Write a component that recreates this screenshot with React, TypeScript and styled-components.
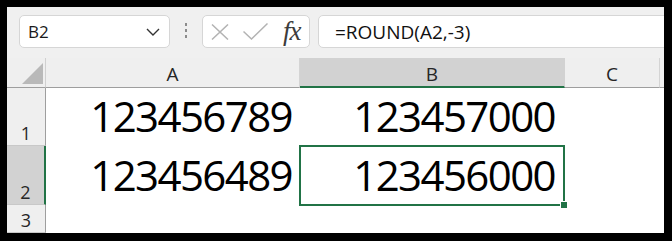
import React from "react";
import styled, { createGlobalStyle } from "styled-components";

const green = "#217346";

const Global = createGlobalStyle`
  * { box-sizing: border-box; }
  html, body { margin: 0; padding: 0; background: #000; }
  body { font-family: "Open Sans", "Noto Sans", sans-serif; }
`;

const Frame = styled.div`
  width: 672px;
  height: 241px;
  background: #000;
  padding: 7px 8px 8px 7px;
`;

const Window = styled.div`
  width: 100%;
  height: 100%;
  background: #fff;
  overflow: hidden;
  display: flex;
  flex-direction: column;
`;

const FormulaBar = styled.div`
  height: 51px;
  flex: none;
  display: flex;
  align-items: flex-start;
  padding: 8px 0 0 12px;
  background: #f0f0f0;
`;

const Box = styled.div`
  height: 33px;
  background: #fff;
  border: 1px solid #d6d6d6;
  border-radius: 5px;
  display: flex;
  align-items: center;
`;

const NameBox = styled(Box)`
  width: 151px;
  padding: 0 9px 0 8px;
  justify-content: space-between;
  font-size: 17px;
  color: #1a1a1a;
`;

const Grip = styled.div`
  width: 32px;
  height: 33px;
  display: flex;
  flex-direction: column;
  align-items: center;
  justify-content: center;
  gap: 3px;
  padding-bottom: 2px;
`;

const Dot = styled.span`
  width: 2px;
  height: 3px;
  background: #8c8c8c;
`;

const FxBox = styled(Box)`
  width: 108px;
  padding-left: 8px;
  gap: 14px;
`;

const Fx = styled.span`
  font-family: "Liberation Serif", "DejaVu Serif", serif;
  font-style: italic;
  font-size: 27px;
  line-height: 1;
  color: #3c3c3c;
  margin-left: 1px;
  letter-spacing: -1px;
`;

const FormulaInput = styled(Box)`
  flex: 1;
  margin-left: 8px;
  margin-right: -8px;
  padding-left: 16px;
  font-size: 19px;
  color: #111;
`;

const Sheet = styled.div`
  flex: 1;
  display: grid;
  grid-template-columns: 39px 254px 265px 95px 1fr;
  grid-template-rows: 30px 58px 59px 1fr;
`;

const Corner = styled.div`
  background: #efefef;
  border-right: 1px solid #d0d0d0;
  border-bottom: 1px solid #9e9e9e;
  display: flex;
  align-items: flex-end;
  justify-content: flex-end;
  padding: 0 2px 3px 0;
`;

const ColHeader = styled.div<{ $selected?: boolean }>`
  background: ${(p) => (p.$selected ? "#d2d2d2" : "#efefef")};
  border-right: 1px solid ${(p) => (p.$selected ? "#d2d2d2" : "#d4d4d4")};
  border-bottom: ${(p) => (p.$selected ? `2px solid ${green}` : "1px solid #9e9e9e")};
  display: flex;
  align-items: center;
  justify-content: center;
  padding-top: 3px;
  font-size: 19px;
  color: #262626;
`;

const RowHeader = styled.div<{ $selected?: boolean }>`
  background: ${(p) => (p.$selected ? "#d2d2d2" : "#efefef")};
  border-right: ${(p) => (p.$selected ? `2px solid ${green}` : "1px solid #9e9e9e")};
  border-bottom: 1px solid #c8c8c8;
  display: flex;
  align-items: flex-end;
  justify-content: center;
  padding-bottom: 3px;
  font-size: 18px;
  line-height: 18px;
  color: #262626;
`;

const Cell = styled.div<{ $pad?: number }>`
  position: relative;
  background: #fff;
  display: flex;
  align-items: flex-end;
  justify-content: flex-end;
  padding-right: ${(p) => p.$pad ?? 8}px;
  padding-bottom: 9px;
  font-size: 42px;
  line-height: 42px;
  letter-spacing: -1.6px;
  color: #000;
`;

const Selection = styled.div`
  position: absolute;
  top: -1px;
  left: -1px;
  right: 0;
  bottom: -1px;
  border: 2px solid ${green};
  pointer-events: none;
  z-index: 2;
`;

const FillHandle = styled.div`
  position: absolute;
  right: -4px;
  bottom: -4px;
  width: 7px;
  height: 7px;
  background: ${green};
  border-left: 1px solid #fff;
  border-top: 1px solid #fff;
`;

const Chevron = () => (
  <svg width="14" height="8" viewBox="0 0 14 8">
    <polyline points="1,1 7,7 13,1" fill="none" stroke="#333" strokeWidth="1.4" />
  </svg>
);

const Cancel = () => (
  <svg width="18" height="16" viewBox="0 0 18 16">
    <path d="M1 0.5 L17 15.5 M17 0.5 L1 15.5" stroke="#b3b3b3" strokeWidth="1.5" fill="none" />
  </svg>
);

const Enter = () => (
  <svg width="25" height="17" viewBox="0 0 25 17">
    <path d="M0.5 8.5 L8.5 16 L24.5 0.5" stroke="#b3b3b3" strokeWidth="1.5" fill="none" />
  </svg>
);

const CornerMark = () => (
  <svg width="21" height="21" viewBox="0 0 21 21">
    <polygon points="21,0 21,21 0,21" fill="#b9b9b9" />
  </svg>
);

const rows = [
  { n: "1", a: "123456789", b: "123457000" },
  { n: "2", a: "123456489", b: "123456000", selected: true },
];

export default function App() {
  return (
    <Frame>
      <Global />
      <Window>
        <FormulaBar>
          <NameBox>
            <span>B2</span>
            <Chevron />
          </NameBox>
          <Grip>
            <Dot />
            <Dot />
            <Dot />
          </Grip>
          <FxBox>
            <Cancel />
            <Enter />
            <Fx>fx</Fx>
          </FxBox>
          <FormulaInput>=ROUND(A2,-3)</FormulaInput>
        </FormulaBar>
        <Sheet>
          <Corner>
            <CornerMark />
          </Corner>
          <ColHeader>A</ColHeader>
          <ColHeader $selected>B</ColHeader>
          <ColHeader>C</ColHeader>
          <ColHeader />
          {rows.map((r) => (
            <React.Fragment key={r.n}>
              <RowHeader $selected={r.selected}>{r.n}</RowHeader>
              <Cell $pad={8}>{r.a}</Cell>
              <Cell $pad={10}>
                {r.b}
                {r.selected && (
                  <Selection>
                    <FillHandle />
                  </Selection>
                )}
              </Cell>
              <Cell />
              <Cell />
            </React.Fragment>
          ))}
          <RowHeader>3</RowHeader>
          <Cell />
          <Cell />
          <Cell />
          <Cell />
        </Sheet>
      </Window>
    </Frame>
  );
}
